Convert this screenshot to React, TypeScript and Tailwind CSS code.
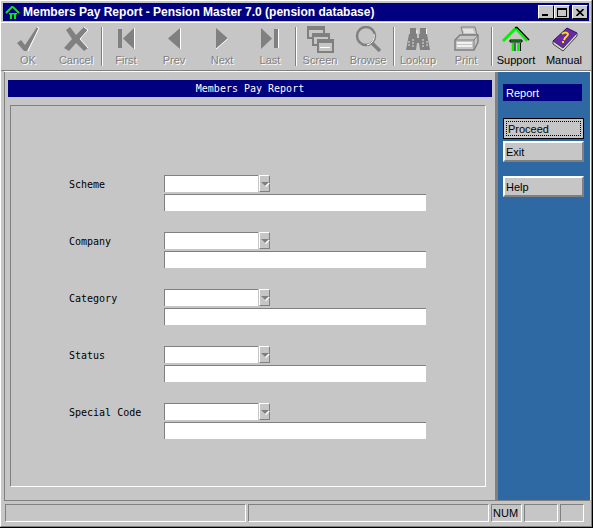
import React from 'react';

const SANS = "font-['Liberation_Sans',Arial,sans-serif]";

const OkIcon = () => (
  <svg width="28" height="28" viewBox="0 0 28 28">
    <path d="M3 17 L7 14 L11 19 L23 1 L25 2 L13 25 L10 25 Z" fill="#808080" />
    <path d="M23 1 L25 2 L14 25" fill="none" stroke="#fff" strokeWidth="1" />
  </svg>
);

const CancelIon = () => (
  <svg width="28" height="28" viewBox="0 0 28 28">
    <path d="M4 4 L8 1 L14 9 L22 1 L26 4 L18 13 L26 22 L22 25 L14 17 L7 25 L2 22 L10 13 Z" fill="#808080" />
    <path d="M22 1 L26 4 L18 13 L26 22" fill="none" stroke="#fff" strokeWidth="1" />
  </svg>
);

const FirstIcon = () => (
  <svg width="28" height="28" viewBox="0 0 28 28">
    <rect x="6" y="3" width="4" height="19" fill="#808080" />
    <path d="M22 2 L22 23 L11 12.5 Z" fill="#808080" />
    <path d="M22.5 2 L22.5 23" stroke="#fff" strokeWidth="1" />
  </svg>
);

const PrevIcon = () => (
  <svg width="28" height="28" viewBox="0 0 28 28">
    <path d="M20 2 L20 23 L8 12.5 Z" fill="#808080" />
    <path d="M20.5 2 L20.5 23" stroke="#fff" strokeWidth="1" />
  </svg>
);

const NextIcon = () => (
  <svg width="28" height="28" viewBox="0 0 28 28">
    <path d="M8 2 L8 23 L20 12.5 Z" fill="#808080" />
    <path d="M8 23 L20 12.5" stroke="#fff" strokeWidth="1" />
  </svg>
);

const LastIcon = () => (
  <svg width="28" height="28" viewBox="0 0 28 28">
    <path d="M5 2 L5 23 L16 12.5 Z" fill="#808080" />
    <rect x="18" y="3" width="4" height="19" fill="#808080" />
    <path d="M22.5 3 L22.5 22" stroke="#fff" strokeWidth="1" />
  </svg>
);

const ScreenIcon = () => (
  <svg width="28" height="28" viewBox="0 0 28 28" shapeRendering="crispEdges">
    <rect x="1.5" y="0.5" width="16" height="11" fill="#c6c6c6" stroke="#808080" strokeWidth="2" />
    <rect x="2" y="1" width="15" height="3" fill="#808080" />
    <rect x="6.5" y="7.5" width="16" height="11" fill="#c6c6c6" stroke="#808080" strokeWidth="2" />
    <rect x="7" y="8" width="15" height="3" fill="#808080" />
    <rect x="11.5" y="13.5" width="15" height="12" fill="#c6c6c6" stroke="#808080" strokeWidth="2" />
    <rect x="12" y="14" width="14" height="3" fill="#808080" />
    <path d="M14 21.5 H24" stroke="#fff" />
  </svg>
);

const BrowseIcon = () => (
  <svg width="28" height="28" viewBox="0 0 28 28">
    <circle cx="12" cy="10" r="9" fill="none" stroke="#808080" strokeWidth="2.5" />
    <path d="M18 17 L26 25" stroke="#808080" strokeWidth="3.5" />
    <path d="M20 8 A9 9 0 0 1 13 19" fill="none" stroke="#fff" strokeWidth="1" />
  </svg>
);

const LookupIcon = () => (
  <svg width="28" height="28" viewBox="0 0 28 28">
    <rect x="6" y="2" width="6" height="6" fill="#808080" />
    <rect x="16" y="2" width="6" height="6" fill="#808080" />
    <path d="M5 8 H13 V12 H15 V8 H23 L26 24 H16 L15 17 H13 L12 24 H2 Z" fill="#808080" />
    <path d="M5 15 V21 M9 13 V21 M19 13 V21 M23 15 V21" stroke="#e0e0e0" strokeWidth="1" strokeDasharray="2 1" />
    <path d="M13 4 V7 M22.5 3 V8" stroke="#fff" strokeWidth="1" />
  </svg>
);

const PrintIcon = () => (
  <svg width="28" height="28" viewBox="0 0 28 28">
    <path d="M9 1 H23 L25 9 H11 Z" fill="#c6c6c6" stroke="#808080" />
    <path d="M11 4 H21 M12 6 H22" stroke="#fff" />
    <path d="M3 14 L8 9 H26 V16 L22 24 H3 Z" fill="#c6c6c6" stroke="#808080" strokeWidth="1.5" />
    <path d="M3 14 H22 V24 M22 14 L26 9" fill="none" stroke="#808080" />
    <path d="M5 17 H20 M5 20 H20" stroke="#fff" strokeWidth="1.5" />
  </svg>
);

const SupportIcon = () => (
  <svg width="28" height="28" viewBox="0 0 28 28">
    <path d="M1 15 L13 3 L15 3" fill="none" stroke="#00f000" strokeWidth="3" />
    <path d="M13 1.5 L15 1.5 L27 14" fill="none" stroke="#000" strokeWidth="1.5" />
    <path d="M15 4 L25 15" fill="none" stroke="#00f000" strokeWidth="2" />
    <path d="M8 14 H20 V16 H8 Z" fill="#00f000" stroke="#000" strokeWidth="1" />
    <path d="M11 17 V25 M16.5 17 V25" stroke="#00f000" strokeWidth="2.5" />
    <path d="M13 17 V25 M18.5 17 V25" stroke="#000" strokeWidth="1" />
  </svg>
);

const ManualIcon = () => (
  <svg width="28" height="28" viewBox="0 0 28 28">
    <path d="M3 15 L17 2 L27 7 L13 22 Z" fill="#6a2aa8" stroke="#301060" strokeWidth="1" />
    <path d="M3 15 L3 18 L13 25 L27 10 L27 7 L13 22 Z" fill="#d8d8d8" stroke="#404040" strokeWidth="1" />
    <path d="M12 8 Q16 5 18 8 Q18 10 15 12 L14 14" fill="none" stroke="#ffe000" strokeWidth="2" />
    <rect x="12" y="15" width="2" height="2" fill="#ffe000" />
  </svg>
);

const HomeIcon = () => (
  <svg width="16" height="14" viewBox="0 0 16 14">
    <path d="M1 8 L7 2 H8" fill="none" stroke="#00f000" strokeWidth="2" />
    <path d="M7 0.5 H9 L16 7.5" fill="none" stroke="#000" strokeWidth="1" />
    <path d="M8 2 L14 8" fill="none" stroke="#00f000" strokeWidth="2" />
    <path d="M4 8 H12 V9.5 H4 Z" fill="#00f000" />
    <path d="M6 9 V14 M10 9 V14" stroke="#00f000" strokeWidth="2" />
  </svg>
);

const ToolButton = ({ icon, label, enabled }: { icon: React.ReactNode; label: string; enabled?: boolean }) => (
  <div className="w-[48px] flex flex-col items-center">
    <div className="h-[28px] mt-[3px] flex items-start justify-center">{icon}</div>
    <span
      className={`text-[11px] leading-[13px] ${enabled ? 'text-black' : 'text-[#808080] [text-shadow:1px_1px_0_#fff]'}`}
    >
      {label}
    </span>
  </div>
);

const Sep = () => <div className="w-[2px] h-[39px] mt-[4px] ml-[1px] -mr-[1px] bg-[#808080] border-r border-white" />;

const CaptionButton = ({ children, className }: { children: React.ReactNode; className?: string }) => (
  <div
    className={`w-[16px] h-[14px] bg-[#c6c6c6] border border-t-white border-l-white border-r-black border-b-black flex items-center justify-center ${className ?? ''}`}
  >
    {children}
  </div>
);

const Field = ({ label }: { label: string }) => (
  <div className="flex h-[57px]">
    <div className="w-[95px] pt-[3px] text-[10px] leading-[13px] font-['DejaVu_Sans_Mono',monospace] text-black">
      {label}
    </div>
    <div className="flex flex-col gap-[2px]">
      <div className="flex gap-[1px] h-[17px]">
        <div className="w-[94px] bg-white border-t border-l border-[#808080]" />
        <div className="w-[11px] bg-[#c6c6c6] border border-t-white border-l-white border-r-[#808080] border-b-[#808080] flex items-center justify-center">
          <div className="w-0 h-0 border-x-[4px] border-x-transparent border-t-[4px] border-t-[#808080] [filter:drop-shadow(1px_1px_0_#fff)]" />
        </div>
      </div>
      <div className="w-[262px] h-[17px] bg-white border-t border-l border-[#808080]" />
    </div>
  </div>
);

const SideButton = ({ label, className, focus }: { label: string; className?: string; focus?: boolean }) => (
  <div
    className={`w-[81px] h-[21px] bg-[#c6c6c6] text-[11px] text-black ${
      focus
        ? 'border border-black'
        : 'border-2 border-t-white border-l-white border-r-[#808080] border-b-[#808080]'
    } ${className ?? ''}`}
  >
    {focus ? (
      <div className="m-[2px] h-[15px] border border-dotted border-black pl-[1px] leading-[14px]">{label}</div>
    ) : (
      <div className="pl-[1px] leading-[19px]">{label}</div>
    )}
  </div>
);

const StatusPane = ({ width, children }: { width: string; children?: React.ReactNode }) => (
  <div className={`${width} h-[18px] border border-t-[#808080] border-l-[#808080] border-r-white border-b-white text-[11px] leading-[16px] pl-[1px] text-black`}>
    {children}
  </div>
);

export default function App() {
  return (
    <div className={`${SANS} w-[593px] h-[528px] bg-[#c6c6c6] border-r border-b border-black overflow-hidden`}>
      <div className="h-full border-t border-l border-t-white border-l-white border-r border-b border-r-[#808080] border-b-[#808080] flex flex-col">
        <div className="mx-[2px] mt-[2px] h-[18px] bg-[#000080] flex items-center pl-[2px] pr-[1px] shrink-0">
          <HomeIcon />
          <span className="ml-[2px] text-[12px] font-bold text-white leading-[16px]">
            Members Pay Report - Pension Master 7.0 (pension database)
          </span>
          <div className="ml-auto flex">
            <CaptionButton>
              <div className="w-[6px] h-[2px] bg-black mt-[6px] -ml-[2px]" />
            </CaptionButton>
            <CaptionButton>
              <div className="w-[10px] h-[9px] border border-black border-t-2" />
            </CaptionButton>
            <CaptionButton className="ml-[2px]">
              <svg width="8" height="7" viewBox="0 0 8 7">
                <path d="M0.5 0 L7.5 7 M7.5 0 L0.5 7" stroke="#000" strokeWidth="1.6" />
              </svg>
            </CaptionButton>
          </div>
        </div>

        <div className="mt-[1px] h-[49px] border-t border-white border-b border-b-[#808080] flex pl-[3px] shrink-0">
          <ToolButton icon={<OkIcon />} label="OK" />
          <ToolButton icon={<CancelIon />} label="Cancel" />
          <Sep />
          <ToolButton icon={<FirstIcon />} label="First" />
          <ToolButton icon={<PrevIcon />} label="Prev" />
          <ToolButton icon={<NextIcon />} label="Next" />
          <ToolButton icon={<LastIcon />} label="Last" />
          <Sep />
          <ToolButton icon={<ScreenIcon />} label="Screen" />
          <ToolButton icon={<BrowseIcon />} label="Browse" />
          <Sep />
          <ToolButton icon={<LookupIcon />} label="Lookup" />
          <ToolButton icon={<PrintIcon />} label="Print" />
          <Sep />
          <ToolButton icon={<SupportIcon />} label="Support" enabled />
          <ToolButton icon={<ManualIcon />} label="Manual" enabled />
        </div>

        <div className="flex h-[430px] ml-[3px] border-t border-white border-r border-b border-b-[#808080] shrink-0">
          <div className="w-[491px] border-l border-[#808080] pl-[3px] pt-[8px]">
            <div className="w-[484px] h-[17px] bg-[#000080] text-white text-center text-[10px] leading-[18px] font-['DejaVu_Sans_Mono',monospace]">
              Members Pay Report
            </div>
            <div className="ml-[2px] mt-[8px] w-[476px] h-[382px] border border-t-[#808080] border-l-[#808080] border-r-white border-b-white pl-[58px] pt-[69px]">
              <Field label="Scheme" />
              <Field label="Company" />
              <Field label="Category" />
              <Field label="Status" />
              <Field label="Special Code" />
            </div>
          </div>
          <div className="w-[3px] bg-[#808080]" />
          <div className="flex-1 bg-[#2f69a4] pl-[5px] pt-[12px]">
            <div className="w-[79px] h-[17px] bg-[#000080] text-white text-[11px] leading-[18px] pl-[3px]">Report</div>
            <SideButton label="Proceed" focus className="mt-[17px]" />
            <SideButton label="Exit" className="mt-[2px]" />
            <SideButton label="Help" className="mt-[14px]" />
          </div>
        </div>

        <div className="flex gap-[2px] mt-[3px] ml-[4px]">
          <StatusPane width="w-[241px]" />
          <StatusPane width="w-[241px]" />
          <StatusPane width="w-[31px]">NUM</StatusPane>
          <StatusPane width="w-[34px]" />
          <StatusPane width="w-[24px]" />
        </div>
      </div>
    </div>
  );
}
